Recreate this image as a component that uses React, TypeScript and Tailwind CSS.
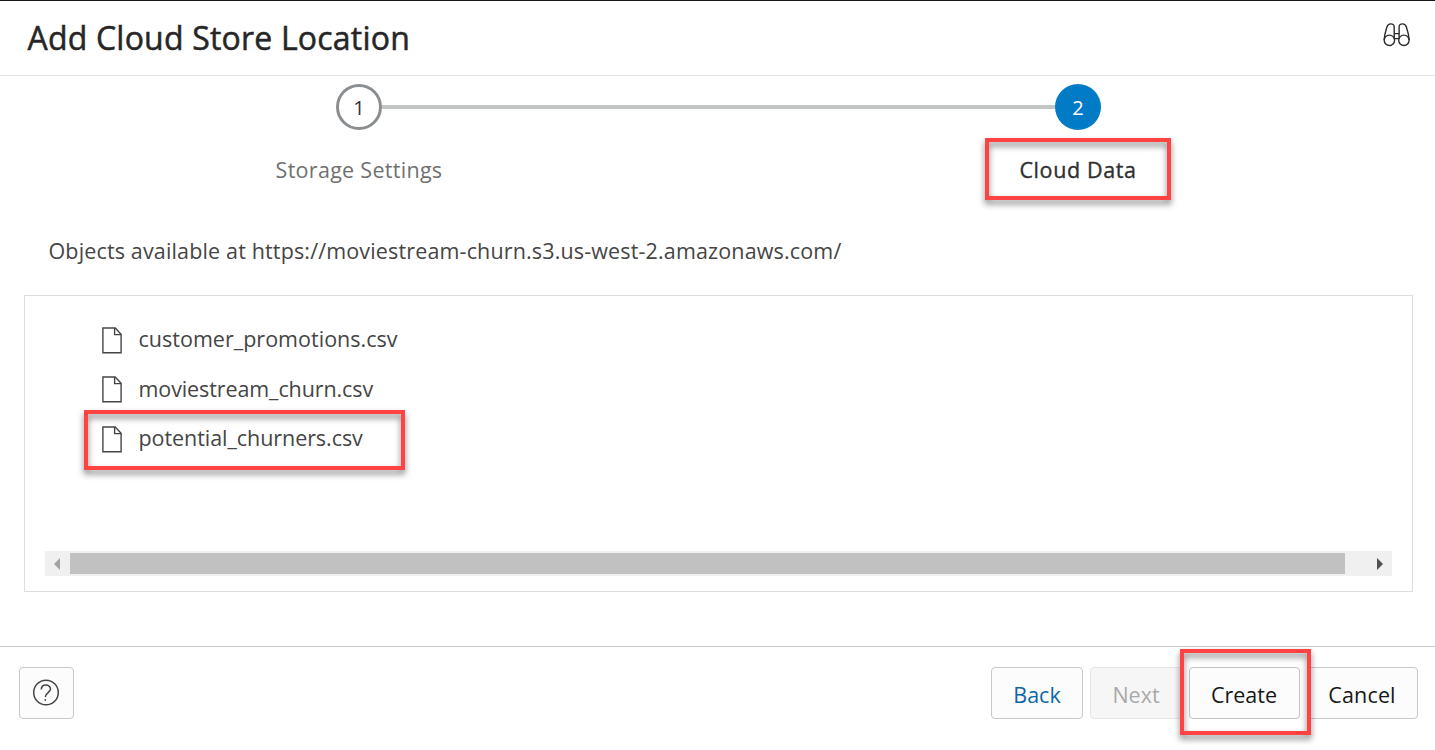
import React from "react";

const files = [
  { name: "customer_promotions.csv", tracking: "tracking-[0.02px]" },
  { name: "moviestream_churn.csv", tracking: "tracking-[-0.1px] pt-px" },
  { name: "potential_churners.csv", tracking: "tracking-[-0.06px]" },
];

function Binoculars() {
  return (
    <svg width="28" height="26" viewBox="0 0 28 26" fill="none" stroke="#2b2b2b" strokeWidth="1.4">
      <circle cx="6.4" cy="18.3" r="5.2" />
      <circle cx="20.9" cy="18.3" r="5.2" />
      <path d="M1.1 18 Q1.6 12 3.9 5 Q4.9 1.9 7.6 1.9 Q11.2 1.9 11.2 5 V16.8" />
      <path d="M26.2 18 Q25.7 12 23.4 5 Q22.4 1.9 19.7 1.9 Q16.1 1.9 16.1 5 V16.8" />
      <path d="M11.2 11.6 H16.1 M11.2 16.6 H16.1" />
    </svg>
  );
}

function FileIcon() {
  return (
    <svg width="20" height="27" viewBox="0 0 20 27" fill="none" stroke="#454545" strokeWidth="1.4">
      <path d="M0.9 1 H13.2 L19.1 7.2 V25.7 H0.9 Z" />
      <path d="M12.6 1 V7.6 H19.1" />
    </svg>
  );
}

function Highlight({ className }: { className: string }) {
  return (
    <div
      className={`pointer-events-none absolute border-4 border-[#ff4343] [filter:drop-shadow(0px_4px_3px_rgba(0,0,0,0.5))] ${className}`}
    />
  );
}

export default function App() {
  return (
    <div className="flex h-[750px] w-[1435px] flex-col overflow-hidden border-t border-[#161616] bg-white font-['Open_Sans','Noto_Sans',sans-serif] text-[21.5px] text-[#454545]">
      <header className="flex h-[75px] shrink-0 items-start justify-between border-b border-[#e4e4e4] pt-[15px] pr-[24px] pl-[27.5px]">
        <h1 className="text-[32px] leading-[44px] tracking-[0.2px] whitespace-nowrap text-[#262626] [-webkit-text-stroke:0.5px_#262626]">Add Cloud Store Location</h1>
        <div className="pt-[6px]">
          <Binoculars />
        </div>
      </header>

      <main className="flex h-[570px] shrink-0 flex-col">
        <div className="mt-[8px] flex h-[46px] items-center pl-[336px]">
          <div className="flex size-[46px] items-center justify-center rounded-full border-[3px] border-[#8b8e91] pt-[2px] text-[20px] text-[#333]">1</div>
          <div className="h-[4px] w-[673px] bg-[#c4c6c5]" />
          <div className="flex size-[46px] items-center justify-center rounded-full bg-[#027bc7] pt-[2px] text-[20px] text-white">2</div>
        </div>
        <div className="mt-[23px] flex h-[34px] gap-[526px] pl-[259px] leading-[34px]">
          <div className="w-[200px] text-center tracking-[0.29px] whitespace-nowrap text-[#707070]">Storage Settings</div>
          <div className="relative w-[186px] text-center tracking-[0.62px] whitespace-nowrap text-[#2f2f2f] [-webkit-text-stroke:0.35px_#2f2f2f]">
            Cloud Data
            <Highlight className="top-[-15px] left-0 h-[62px] w-[186px]" />
          </div>
        </div>
        <p className="mt-[47px] h-[34px] pl-[48.5px] leading-[34px] tracking-[0.15px] whitespace-nowrap">
          Objects available at https://moviestream-churn.s3.us-west-2.amazonaws.com/
        </p>
        <section className="mt-[27px] mr-[22px] ml-[24px] flex h-[297px] flex-col border border-[#dedede] px-[20px]">
          <ul className="relative h-[255px] pt-[18px] pl-[57px]">
            {files.map((f) => (
              <li key={f.name} className="flex h-[49.5px] items-center gap-[16.5px]">
                <span className="pt-[3px]">
                  <FileIcon />
                </span>
                <span className={`whitespace-nowrap ${f.tracking}`}>{f.name}</span>
              </li>
            ))}
            <Highlight className="top-[114px] left-[39px] h-[60px] w-[321px]" />
          </ul>
          <div className="flex h-[25px] items-center bg-[#f0f0f0]">
            <div className="flex w-[25px] pl-[9px]">
              <svg width="6" height="12" viewBox="0 0 6 12" fill="#a3a3a3">
                <path d="M6 0 V12 L0 6Z" />
              </svg>
            </div>
            <div className="h-[21px] w-[1275px] bg-[#c1c1c1]" />
            <div className="flex flex-1 justify-end pr-[9px]">
              <svg width="6" height="12" viewBox="0 0 6 12" fill="#505050">
                <path d="M0 0 V12 L6 6Z" />
              </svg>
            </div>
          </div>
        </section>
      </main>

      <footer className="flex h-[104px] shrink-0 items-start border-t border-[#c8c8c8] pt-[20px] pr-[17px] pl-[19px]">
        <button className="flex h-[52px] w-[55px] items-center justify-center rounded-[4px] border border-[#c8c8c8] bg-[#fcfcfc] pr-px">
          <svg width="28" height="28" viewBox="0 0 28 28" fill="none" stroke="#454545" strokeWidth="1.5">
            <circle cx="14" cy="13.5" r="12.3" />
            <path d="M9.3 10.6 C9.3 4.6 18.5 4.8 18.5 10.1 C18.5 13.7 13.3 13.5 13.3 18" />
            <path d="M13.3 20.2 V21.8" />
          </svg>
        </button>
        <div className="relative ml-auto flex">
          <button className="h-[52px] w-[92px] rounded-[4px] border border-[#c8c8c8] bg-[#fcfcfc] pt-[4px] text-[#0b67a5]">Back</button>
          <button className="ml-[7px] h-[52px] w-[92px] rounded-[4px] border border-[#e4e4e4] bg-[#f6f6f6] pt-[4px] text-[#a9a9a9]">Next</button>
          <button className="ml-[7px] h-[52px] w-[111px] rounded-[4px] border border-[#c4c4c4] bg-[#fcfcfc] pt-[4px] pr-[1px] text-[#161616]">Create</button>
          <button className="ml-[7px] h-[52px] w-[111px] rounded-[4px] border border-[#c8c8c8] bg-[#fcfcfc] pt-[4px] pr-[1px] tracking-[0.15px] text-[#161616]">Cancel</button>
          <Highlight className="top-[-18px] left-[189px] h-[86px] w-[131px]" />
        </div>
      </footer>
    </div>
  );
}
